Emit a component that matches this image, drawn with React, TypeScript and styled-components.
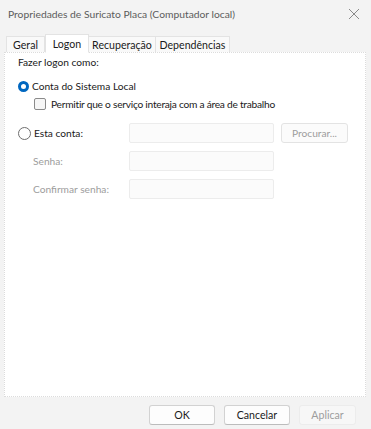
import styled, { createGlobalStyle } from "styled-components";

const GlobalStyle = createGlobalStyle`
  html, body { margin: 0; padding: 0; background: #f3f3f3; }
  body { font-family: "Lato", "Noto Sans", sans-serif; font-size: 10.2px; color: #1a1a1a; }
`;

const Window = styled.div`
  width: 371px;
  height: 429px;
  display: flex;
  flex-direction: column;
  background: #f3f3f3;
  box-sizing: border-box;
  white-space: nowrap;
`;

const TitleBar = styled.div`
  height: 28px;
  display: flex;
  align-items: center;
  justify-content: space-between;
  padding: 0 8px 0 8px;
`;

const TitleText = styled.div`
  font-size: 10.3px;
  color: #5c5c5c;
`;

const Close = styled.div`
  width: 14px;
  height: 14px;
  margin-right: 2px;
  display: flex;
  align-items: center;
  justify-content: center;
`;

const TabStrip = styled.div`
  display: flex;
  align-items: flex-end;
  padding: 6px 0 0 6px;
  height: 18px;
  position: relative;
  z-index: 1;
`;

const Tab = styled.div<{ $active?: boolean; $w: number }>`
  width: ${p => p.$w}px;
  height: ${p => (p.$active ? "17px" : "15px")};
  display: flex;
  align-items: center;
  justify-content: center;
  background: ${p => (p.$active ? "#ffffff" : "#f9f9f9")};
  border: 1px solid #e3e3e3;
  border-left: ${p => (p.$active ? "1px solid #e3e3e3" : "none")};
  border-bottom: ${p => (p.$active ? "1px solid #ffffff" : "none")};
  margin-bottom: ${p => (p.$active ? "-1px" : "0")};
  z-index: ${p => (p.$active ? 2 : 1)};
  color: #1a1a1a;
  font-size: 10.6px;
  box-sizing: content-box;
  &:first-child { border-left: 1px solid #e3e3e3; }
`;

const Panel = styled.div`
  margin: 0 5px 0 4px;
  height: 345px;
  background: #ffffff;
  border: 1px dotted #dcdcdc;
  padding: 1px 14px 0 13px;
  box-sizing: border-box;
`;

const Caption = styled.div`
  height: 16px;
  display: flex;
  align-items: center;
`;

const OptionRow = styled.div<{ $indent?: number; $top?: number; $tight?: boolean }>`
  display: flex;
  align-items: center;
  gap: 3px;
  margin-left: ${p => p.$indent ?? 0}px;
  margin-top: ${p => p.$top ?? 0}px;
  height: 16px;
  letter-spacing: ${p => (p.$tight ? "-0.25px" : "normal")};
`;

const Radio = styled.div<{ $checked?: boolean }>`
  width: ${p => (p.$checked ? "5px" : "11px")};
  height: ${p => (p.$checked ? "5px" : "11px")};
  border-radius: 50%;
  border: ${p => (p.$checked ? "3.5px solid #0067c0" : "1px solid #6e6e6e")};
  background: #ffffff;
  flex: none;
`;

const Check = styled.div`
  width: 10px;
  height: 10px;
  border: 1px solid #8a8a8a;
  border-radius: 2px;
  background: #f6f6f6;
  flex: none;
  margin-right: 2px;
`;

const FormGrid = styled.div`
  display: grid;
  grid-template-columns: 104px 145px 67px;
  grid-auto-rows: 20px;
  row-gap: 8px;
  column-gap: 7px;
  margin-top: 11px;
  align-items: center;
`;

const Label = styled.div<{ $disabled?: boolean }>`
  color: ${p => (p.$disabled ? "#9d9d9d" : "#1a1a1a")};
  padding-left: ${p => (p.$disabled ? "15px" : "0")};
  display: flex;
  align-items: center;
  gap: 3px;
`;

const Field = styled.div`
  height: 20px;
  border: 1px solid #ececec;
  border-radius: 2px;
  background: #fbfbfb;
  box-sizing: border-box;
`;

const SmallButton = styled.div`
  height: 20px;
  border: 1px solid #e3e3e3;
  border-radius: 3px;
  background: #fbfbfb;
  color: #9d9d9d;
  display: flex;
  align-items: center;
  justify-content: center;
  box-sizing: border-box;
`;

const Footer = styled.div`
  display: flex;
  justify-content: flex-end;
  gap: 9px;
  padding: 8px 15px 0 0;
`;

const Button = styled.div<{ $disabled?: boolean; $w: number }>`
  width: ${p => p.$w}px;
  height: 20px;
  box-sizing: border-box;
  border: 1px solid ${p => (p.$disabled ? "#ececec" : "#d2d2d2")};
  border-bottom-color: ${p => (p.$disabled ? "#ececec" : "#bcbcbc")};
  border-radius: 3px;
  background: ${p => (p.$disabled ? "#f7f7f7" : "#fdfdfd")};
  color: ${p => (p.$disabled ? "#9d9d9d" : "#1a1a1a")};
  font-size: 10.6px;
  display: flex;
  align-items: center;
  justify-content: center;
`;

export default function App() {
  return (
    <Window>
      <GlobalStyle />
      <TitleBar>
        <TitleText>Propriedades de Suricato Placa (Computador local)</TitleText>
        <Close>
          <svg width="12" height="12" viewBox="0 0 12 12">
            <path d="M1 1 L11 11 M11 1 L1 11" stroke="#8a8a8a" strokeWidth="1" fill="none" />
          </svg>
        </Close>
      </TitleBar>
      <TabStrip>
        <Tab $w={37}>Geral</Tab>
        <Tab $w={42} $active>Logon</Tab>
        <Tab $w={66}>Recuperação</Tab>
        <Tab $w={73}>Dependências</Tab>
      </TabStrip>
      <Panel>
        <Caption>Fazer logon como:</Caption>
        <OptionRow $top={8}>
          <Radio $checked />
          <span>Conta do Sistema Local</span>
        </OptionRow>
        <OptionRow $indent={16} $top={2} $tight>
          <Check />
          <span>Permitir que o serviço interaja com a área de trabalho</span>
        </OptionRow>
        <FormGrid>
          <Label>
            <Radio />
            <span>Esta conta:</span>
          </Label>
          <Field />
          <SmallButton>Procurar...</SmallButton>
          <Label $disabled>Senha:</Label>
          <Field />
          <div />
          <Label $disabled>Confirmar senha:</Label>
          <Field />
          <div />
        </FormGrid>
      </Panel>
      <Footer>
        <Button $w={66}>OK</Button>
        <Button $w={66}>Cancelar</Button>
        <Button $w={57} $disabled>Aplicar</Button>
      </Footer>
    </Window>
  );
}
